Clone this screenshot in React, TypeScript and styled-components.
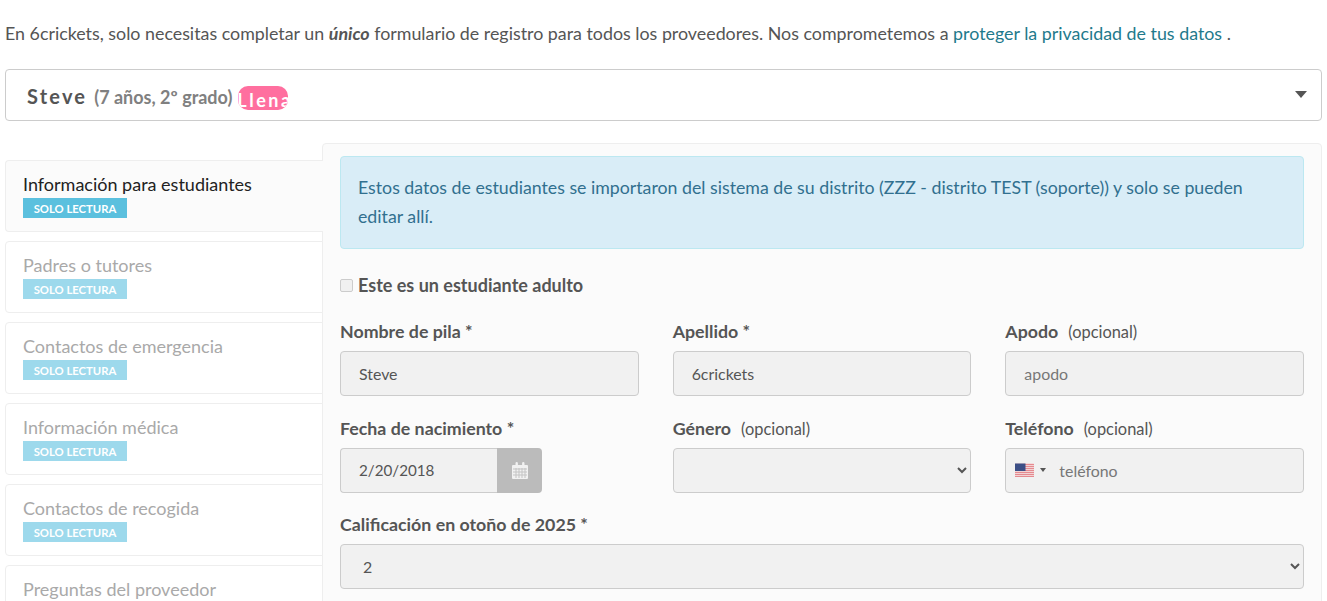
import React, { FC } from 'react';
import styled, { createGlobalStyle } from 'styled-components';

const colors = {
  text: '#555555',
  link: '#1f7a8c',
  border: '#cccccc',
  softBorder: '#eeeeee',
  panel: '#fbfbfb',
  disabled: '#f1f1f1',
};

const GlobalStyle = createGlobalStyle`
  html, body {
    margin: 0;
    padding: 0;
    height: 601px;
    overflow: hidden;
    background: #fff;
    font-family: Lato, "Open Sans", sans-serif;
    color: ${colors.text};
  }
  * { box-sizing: border-box; }
`;

const Page = styled.div`
  padding: 22px 5px 0;
  height: 601px;
  overflow: hidden;
`;

const Intro = styled.p`
  margin: 0 0 25px;
  font-size: 17.84px;
  line-height: 22px;
  height: 22px;
  white-space: nowrap;
`;

const Link = styled.a`
  color: ${colors.link};
  text-decoration: none;
`;

const StudentBar = styled.div`
  position: relative;
  display: flex;
  align-items: center;
  height: 52px;
  padding: 2px 0 0 21px;
  border: 1px solid ${colors.border};
  border-radius: 4px;
  margin-bottom: 22px;
`;

const StudentName = styled.span`
  font-size: 20px;
  font-weight: 700;
  letter-spacing: 2.2px;
  margin-right: 7px;
`;

const StudentMeta = styled.span`
  font-size: 18px;
  font-weight: 700;
  color: #808080;
  margin: 2px 6px 0 0;
`;

const FullBadge = styled.span`
  display: block;
  width: 50px;
  height: 24px;
  margin-top: 3px;
  overflow: hidden;
  border-radius: 10px;
  background: #ff6f9f;
  color: #fff;
  font-size: 18px;
  font-weight: 700;
  line-height: 28px;
  letter-spacing: 2.5px;
  white-space: nowrap;
  text-indent: -1px;
`;

const Caret = styled.span`
  position: absolute;
  right: 14px;
  top: 21px;
  border-left: 6px solid transparent;
  border-right: 6px solid transparent;
  border-top: 7px solid #555;
`;

const Body = styled.div`
  display: flex;
  align-items: flex-start;
`;

const Sidebar = styled.nav`
  position: relative;
  z-index: 1;
  flex: 0 0 318px;
  margin-right: -1px;
  padding-top: 17px;
  display: flex;
  flex-direction: column;
  gap: 9px;
`;

const Tab = styled.div<{ $active?: boolean }>`
  height: 72px;
  padding: 12px 17px 0;
  border: 1px solid ${colors.softBorder};
  border-right: ${(p) => (p.$active ? '0' : `1px solid ${colors.softBorder}`)};
  border-radius: 4px 0 0 4px;
  background: ${(p) => (p.$active ? colors.panel : '#fff')};
`;

const TabTitle = styled.div<{ $active?: boolean }>`
  font-size: 18px;
  line-height: 22px;
  color: ${(p) => (p.$active ? '#222222' : '#a9a9a9')};
`;

const ReadOnly = styled.div<{ $active?: boolean }>`
  width: 104px;
  height: 20px;
  margin-top: 3px;
  background: ${(p) => (p.$active ? '#5bc0de' : '#9dd9ec')};
  color: #fff;
  font-size: 11.3px;
  font-weight: 700;
  line-height: 21px;
  text-align: center;
`;

const Panel = styled.section`
  flex: 1;
  height: 480px;
  padding: 12px 17px 0;
  background: ${colors.panel};
  border: 1px solid ${colors.softBorder};
  border-radius: 4px 4px 0 0;
`;

const Notice = styled.div`
  height: 93px;
  padding: 16px 17px 0;
  margin-bottom: 24px;
  background: #d9edf7;
  border: 1px solid #bce8f1;
  border-radius: 4px;
  color: #31708f;
  font-size: 17.74px;
  line-height: 29px;
`;

const CheckRow = styled.label`
  display: flex;
  align-items: center;
  gap: 5px;
  height: 24px;
  margin-bottom: 22px;
  font-size: 18px;
  font-weight: 700;
`;

const Check = styled.input`
  appearance: none;
  width: 13px;
  height: 13px;
  margin: 0;
  background: #f0f0f0;
  border: 1px solid ${colors.border};
  border-radius: 2px;
`;

const FormGrid = styled.div`
  display: grid;
  grid-template-columns: repeat(3, 1fr);
  column-gap: 34px;
  row-gap: 19.5px;
`;

const Field = styled.div<{ $wide?: boolean }>`
  grid-column: ${(p) => (p.$wide ? '1 / -1' : 'auto')};
`;

const Label = styled.div`
  display: flex;
  align-items: baseline;
  height: 24px;
  margin-bottom: 8px;
  font-size: 17.8px;
  font-weight: 700;
  line-height: 24px;
  white-space: pre;
`;

const Optional = styled.span`
  margin-left: 10px;
  font-size: 16.4px;
  font-weight: 400;
`;

const Input = styled.input`
  display: block;
  width: 100%;
  height: 45px;
  padding: 0 18px;
  background: ${colors.disabled};
  border: 1px solid ${colors.border};
  border-radius: 4px;
  font: 400 15.9px Lato, sans-serif;
  color: ${colors.text};
  &::placeholder { color: #777; opacity: 1; }
`;

const DateGroup = styled.div`
  display: flex;
  width: 202px;
`;

const DateInput = styled(Input)`
  flex: 1;
  min-width: 0;
  border-right: 0;
  border-radius: 4px 0 0 4px;
  font-size: 15.2px;
`;

const DateAddon = styled.span`
  flex: 0 0 45px;
  display: flex;
  align-items: center;
  justify-content: center;
  background: #bbbbbb;
  border-radius: 0 4px 4px 0;
`;

const Select = styled.select`
  display: block;
  width: 100%;
  height: 45px;
  padding: 0 18px;
  background: ${colors.disabled};
  border: 1px solid ${colors.border};
  border-radius: 4px;
  font: 400 15.9px Lato, sans-serif;
  color: ${colors.text};
  opacity: 1;
`;

const PhoneWrap = styled.div`
  position: relative;
`;

const PhoneInput = styled(Input)`
  padding-left: 53px;
`;

const FlagPicker = styled.div`
  position: absolute;
  left: 10px;
  top: 0;
  height: 45px;
  display: flex;
  align-items: center;
  gap: 6px;
`;

const SmallCaret = styled.span`
  border-left: 3px solid transparent;
  border-right: 3px solid transparent;
  border-top: 4px solid #555;
`;

const UsFlag: FC = () => (
  <svg width="19" height="14" viewBox="0 0 19 14">
    <rect width="19" height="14" rx="1" fill="#f3dcdc" />
    {[1, 3, 5, 7, 9, 11, 13].map((y) => (
      <rect key={y} y={y} width="19" height="1.1" fill="#e58a90" />
    ))}
    <rect y="0.5" width="10.5" height="7.5" fill="#3c4f86" />
  </svg>
);

const CalendarIcon: FC = () => (
  <svg width="16" height="17" viewBox="0 0 16 17">
    <path
      d="M1 3h2.5V1.2a1.2 1.2 0 0 1 2.4 0V3h4.2V1.2a1.2 1.2 0 0 1 2.4 0V3H15a1 1 0 0 1 1 1v12a1 1 0 0 1-1 1H1a1 1 0 0 1-1-1V4a1 1 0 0 1 1-1z"
      fill="#f1f1f1"
    />
    {[6.5, 9.5, 12.5].map((y) => (
      <rect key={y} x="1" y={y} width="14" height="1" fill="#c4c4c4" />
    ))}
    {[3.5, 6.5, 9.5, 12.5].map((x) => (
      <rect key={x} x={x} y="6" width="1" height="10" fill="#c4c4c4" />
    ))}
  </svg>
);

const tabs = [
  'Información para estudiantes',
  'Padres o tutores',
  'Contactos de emergencia',
  'Información médica',
  'Contactos de recogida',
  'Preguntas del proveedor',
];

export default function App() {
  return (
    <Page>
      <GlobalStyle />
      <Intro>
        En 6crickets, solo necesitas completar un <b><i>único</i></b> formulario de registro para todos los proveedores. Nos comprometemos a{' '}
        <Link href="#">proteger la privacidad de tus datos</Link> .
      </Intro>
      <StudentBar>
        <StudentName>Steve</StudentName>
        <StudentMeta>(7 años, 2º grado)</StudentMeta>
        <FullBadge>Llena</FullBadge>
        <Caret />
      </StudentBar>
      <Body>
        <Sidebar>
          {tabs.map((t, i) => (
            <Tab key={t} $active={i === 0}>
              <TabTitle $active={i === 0}>{t}</TabTitle>
              <ReadOnly $active={i === 0}>SOLO LECTURA</ReadOnly>
            </Tab>
          ))}
        </Sidebar>
        <Panel>
          <Notice>
            Estos datos de estudiantes se importaron del sistema de su distrito (ZZZ - distrito TEST (soporte)) y solo se pueden editar allí.
          </Notice>
          <CheckRow>
            <Check type="checkbox" disabled />
            Este es un estudiante adulto
          </CheckRow>
          <FormGrid>
            <Field>
              <Label>Nombre de pila *</Label>
              <Input disabled defaultValue="Steve" />
            </Field>
            <Field>
              <Label>Apellido *</Label>
              <Input disabled defaultValue="6crickets" />
            </Field>
            <Field>
              <Label>Apodo<Optional>(opcional)</Optional></Label>
              <Input disabled placeholder="apodo" />
            </Field>
            <Field>
              <Label>Fecha de nacimiento *</Label>
              <DateGroup>
                <DateInput disabled defaultValue="2/20/2018" />
                <DateAddon><CalendarIcon /></DateAddon>
              </DateGroup>
            </Field>
            <Field>
              <Label>Género<Optional>(opcional)</Optional></Label>
              <Select disabled><option></option></Select>
            </Field>
            <Field>
              <Label>Teléfono<Optional>(opcional)</Optional></Label>
              <PhoneWrap>
                <PhoneInput disabled placeholder="teléfono" />
                <FlagPicker><UsFlag /><SmallCaret /></FlagPicker>
              </PhoneWrap>
            </Field>
            <Field $wide>
              <Label>Calificación en otoño de 2025 *</Label>
              <Select disabled defaultValue="2"><option value="2">2</option></Select>
            </Field>
          </FormGrid>
        </Panel>
      </Body>
    </Page>
  );
}
